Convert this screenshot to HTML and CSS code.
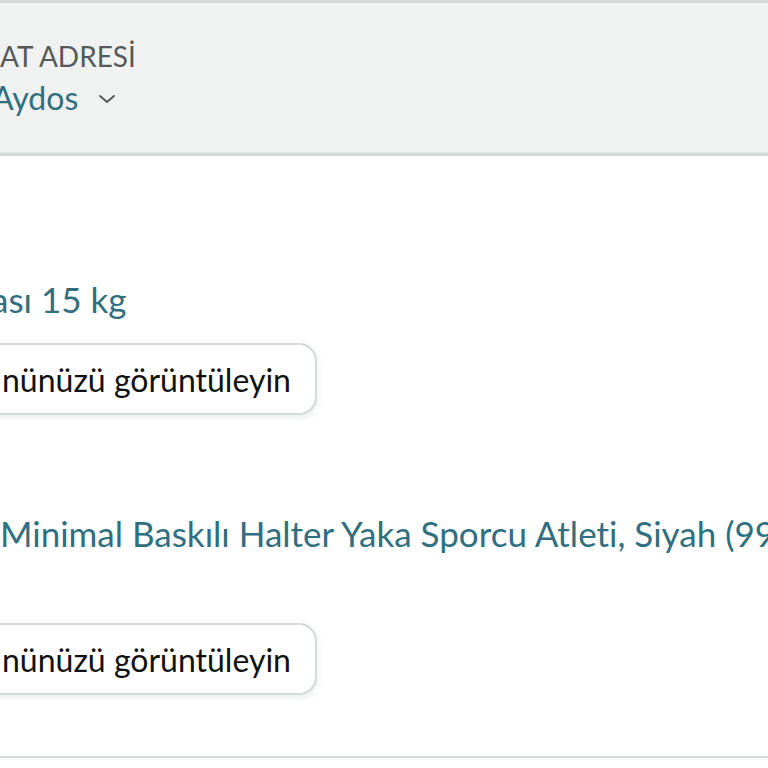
FILE: index.html
```html
<!DOCTYPE html>
<html lang="tr">
<head>
<meta charset="utf-8">
<title>Siparişler</title>
<link rel="stylesheet" href="styles.css">
</head>
<body>
<div class="page">
  <header class="address">
    <div class="address-label">AT ADRESİ</div>
    <div class="address-name">
      <span class="name">Aydos</span>
      <svg class="chevron" width="18" height="12" viewBox="0 0 18 12"><polyline points="2,3 9,9 16,3" fill="none" stroke="#565959" stroke-width="2" stroke-linecap="round" stroke-linejoin="round"/></svg>
    </div>
  </header>
  <main class="items">
    <section class="item item-first">
      <a class="item-title clip-a">ası 15 kg</a>
      <div class="btn">nünüzü görüntüleyin</div>
    </section>
    <section class="item item-second">
      <a class="item-title">Minimal Baskılı Halter Yaka Sporcu Atleti, Siyah (99</a>
      <div class="btn">nünüzü görüntüleyin</div>
    </section>
  </main>
</div>
</body>
</html>
```
FILE: styles.css
```css
html, body {
  margin: 0;
  padding: 0;
  background: #ffffff;
  overflow: hidden;
}
.page {
  width: 768px;
  height: 768px;
  overflow: hidden;
  font-family: "Lato", "Liberation Sans", sans-serif;
  font-variant-ligatures: none;
  font-feature-settings: "liga" 0;
}
.address {
  background: #f0f2f2;
  border-top: 3px solid #d5d9d9;
  border-bottom: 3px solid #d5d9d9;
  box-shadow: inset 0 -1px 0 #e6e8e8;
  height: 156px;
  box-sizing: border-box;
  padding-top: 35px;
}
.address-label {
  font-size: 28px;
  line-height: 36px;
  color: #565959;
  white-space: nowrap;
}
.address-name {
  display: flex;
  align-items: center;
  gap: 20px;
  margin-top: 3px;
  margin-left: -8px;
}
.name {
  font-size: 32px;
  line-height: 42px;
  color: #2f6f80;
}
.chevron {
  display: block;
  margin-top: 2px;
}
.items {
  padding-top: 121px;
  border-bottom: 2px solid #d5d9d9;
  height: 602px;
  box-sizing: border-box;
}
.item-title {
  display: block;
  font-size: 35px;
  line-height: 44px;
  color: #2f6f80;
  white-space: nowrap;
  text-decoration: none;
}
.clip-a {
  margin-left: -9px;
}
.item-second {
  margin-top: 96px;
}
.btn {
  display: inline-flex;
  align-items: center;
  height: 72px;
  box-sizing: border-box;
  margin-left: -40px;
  padding: 0 24px 0 40px;
  border: 2px solid #d5d9d9;
  border-radius: 18px;
  box-shadow: 0 3px 6px rgba(213, 217, 217, 0.5);
  background: #ffffff;
  font-size: 32px;
  color: #0f1111;
  white-space: nowrap;
}
.item-first .btn {
  margin-top: 22px;
}
.item-second .btn {
  margin-top: 68px;
}
```
